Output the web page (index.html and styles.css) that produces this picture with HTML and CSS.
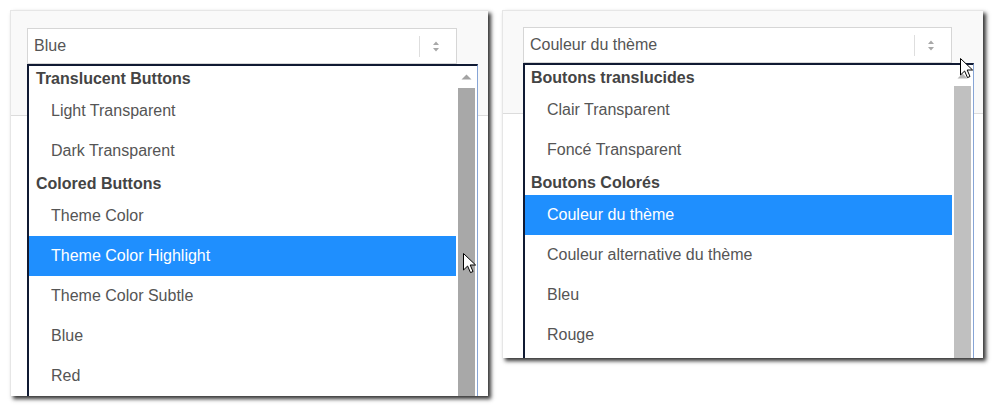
FILE: index.html
```html
<!DOCTYPE html>
<html>
<head>
<meta charset="utf-8">
<link rel="stylesheet" href="styles.css">
</head>
<body>
<div class="stage">
  <div class="win win-en">
    <div class="select">
      <span class="value">Blue</span>
      <span class="sep"></span>
      <svg class="arrows" width="8" height="13" viewBox="0 0 8 13"><path d="M1 5 L4 1.5 L7 5 Z M1 8 L4 11.5 L7 8 Z" fill="#a8a8a8"/></svg>
    </div>
    <div class="list">
      <div class="options">
        <div class="group">Translucent Buttons</div>
        <div class="opt">Light Transparent</div>
        <div class="opt">Dark Transparent</div>
        <div class="group">Colored Buttons</div>
        <div class="opt">Theme Color</div>
        <div class="opt sel">Theme Color Highlight</div>
        <div class="opt">Theme Color Subtle</div>
        <div class="opt">Blue</div>
        <div class="opt">Red</div>
      </div>
      <div class="scrollbar">
        <div class="up"><svg width="11" height="6" viewBox="0 0 11 6"><path d="M0.5 5.5 L5.5 0.5 L10.5 5.5 Z" fill="#a3a3a3"/></svg></div>
        <div class="thumb"></div>
      </div>
    </div>
    <svg class="cursor cursor-en" width="14" height="21" viewBox="0 0 14 21"><path d="M0.5 0.5 L0.5 17 L4.6 13 L7.5 19.6 L10 18.5 L7.2 12 L12.6 12 Z" fill="#fff" stroke="#000" stroke-width="1" stroke-linejoin="miter"/></svg>
  </div>

  <div class="win win-fr">
    <div class="select">
      <span class="value">Couleur du thème</span>
      <span class="sep"></span>
      <svg class="arrows" width="8" height="13" viewBox="0 0 8 13"><path d="M1 5 L4 1.5 L7 5 Z M1 8 L4 11.5 L7 8 Z" fill="#a8a8a8"/></svg>
    </div>
    <div class="list">
      <div class="options">
        <div class="group">Boutons translucides</div>
        <div class="opt">Clair Transparent</div>
        <div class="opt">Foncé Transparent</div>
        <div class="group">Boutons Colorés</div>
        <div class="opt sel">Couleur du thème</div>
        <div class="opt">Couleur alternative du thème</div>
        <div class="opt">Bleu</div>
        <div class="opt">Rouge</div>
      </div>
      <div class="scrollbar">
        <div class="up"><svg width="11" height="6" viewBox="0 0 11 6"><path d="M0.5 5.5 L5.5 0.5 L10.5 5.5 Z" fill="#b5b5b5"/></svg></div>
        <div class="thumb"></div>
      </div>
    </div>
    <svg class="cursor cursor-fr" width="14" height="21" viewBox="0 0 14 21"><path d="M0.5 0.5 L0.5 17 L4.6 13 L7.5 19.6 L10 18.5 L7.2 12 L12.6 12 Z" fill="#fff" stroke="#000" stroke-width="1" stroke-linejoin="miter"/></svg>
  </div>
</div>
</body>
</html>
```

FILE: styles.css
```css
* { box-sizing: border-box; }
html, body { margin: 0; padding: 0; background: #fff; }
body {
  font-family: "Liberation Sans", Arial, sans-serif;
  font-size: 16px;
  color: #555;
  min-height: 408px;
}
.stage {
  display: flex;
  align-items: flex-start;
  gap: 14px;
  padding: 10px 0 12px 10px;
}
.win {
  position: relative;
  overflow: hidden;
  border-top: 1px solid #e6e6e6;
  border-left: 1px solid #e6e6e6;
  box-shadow: 3px 3px 4px rgba(0, 0, 0, 0.8);
}
.win-en {
  width: 478px;
  height: 386px;
  padding: 17px 0 0 16px;
  background: linear-gradient(to bottom, #f9f9f9 0, #f9f9f9 104px, #dcdcdc 104px, #dcdcdc 105px, #fff 105px);
}
.win-fr {
  width: 481px;
  height: 348px;
  padding: 16px 0 0 20px;
  background: linear-gradient(to bottom, #f9f9f9 0, #f9f9f9 102px, #dcdcdc 102px, #dcdcdc 103px, #fff 103px);
}
.select {
  display: flex;
  align-items: center;
  height: 36px;
  background: #fff;
  border: 1px solid #d6d6d6;
  padding: 0 0 0 6px;
}
.win-en .select { width: 430px; }
.win-fr .select { width: 429px; }
.value {
  flex: 1;
  color: #555;
  white-space: nowrap;
}
.sep {
  width: 1px;
  height: 21px;
  background: #dedede;
  margin-right: 12px;
}
.arrows {
  margin-right: 16px;
}
.list {
  display: flex;
  width: 451px;
  height: 400px;
  background: #fff;
  border-top: 2px solid #101a33;
  border-left: 2px solid #101a33;
  border-right: 1px solid #87a5d6;
}
.options {
  flex: 1;
  margin-right: 2px;
}
.group {
  height: 25px;
  line-height: 25px;
  padding-left: 7px;
  font-weight: bold;
  color: #444;
  white-space: nowrap;
}
.win-fr .group { padding-left: 6px; }
.opt {
  height: 40px;
  line-height: 40px;
  padding-left: 22px;
  color: #555;
  white-space: nowrap;
}
.opt.sel {
  background: #1f8ffe;
  color: #fff;
}
.scrollbar {
  width: 17px;
  margin-right: 2px;
  display: flex;
  flex-direction: column;
}
.up {
  height: 22px;
  display: flex;
  justify-content: center;
  align-items: center;
}
.win-fr .up { height: 21px; }
.thumb {
  flex: 1;
  background: #a8a8a8;
}
.win-fr .thumb { background: #c0c0c0; }
.cursor {
  position: absolute;
}
.cursor-en { left: 452px; top: 242px; }
.cursor-fr { left: 457px; top: 47px; }
```
